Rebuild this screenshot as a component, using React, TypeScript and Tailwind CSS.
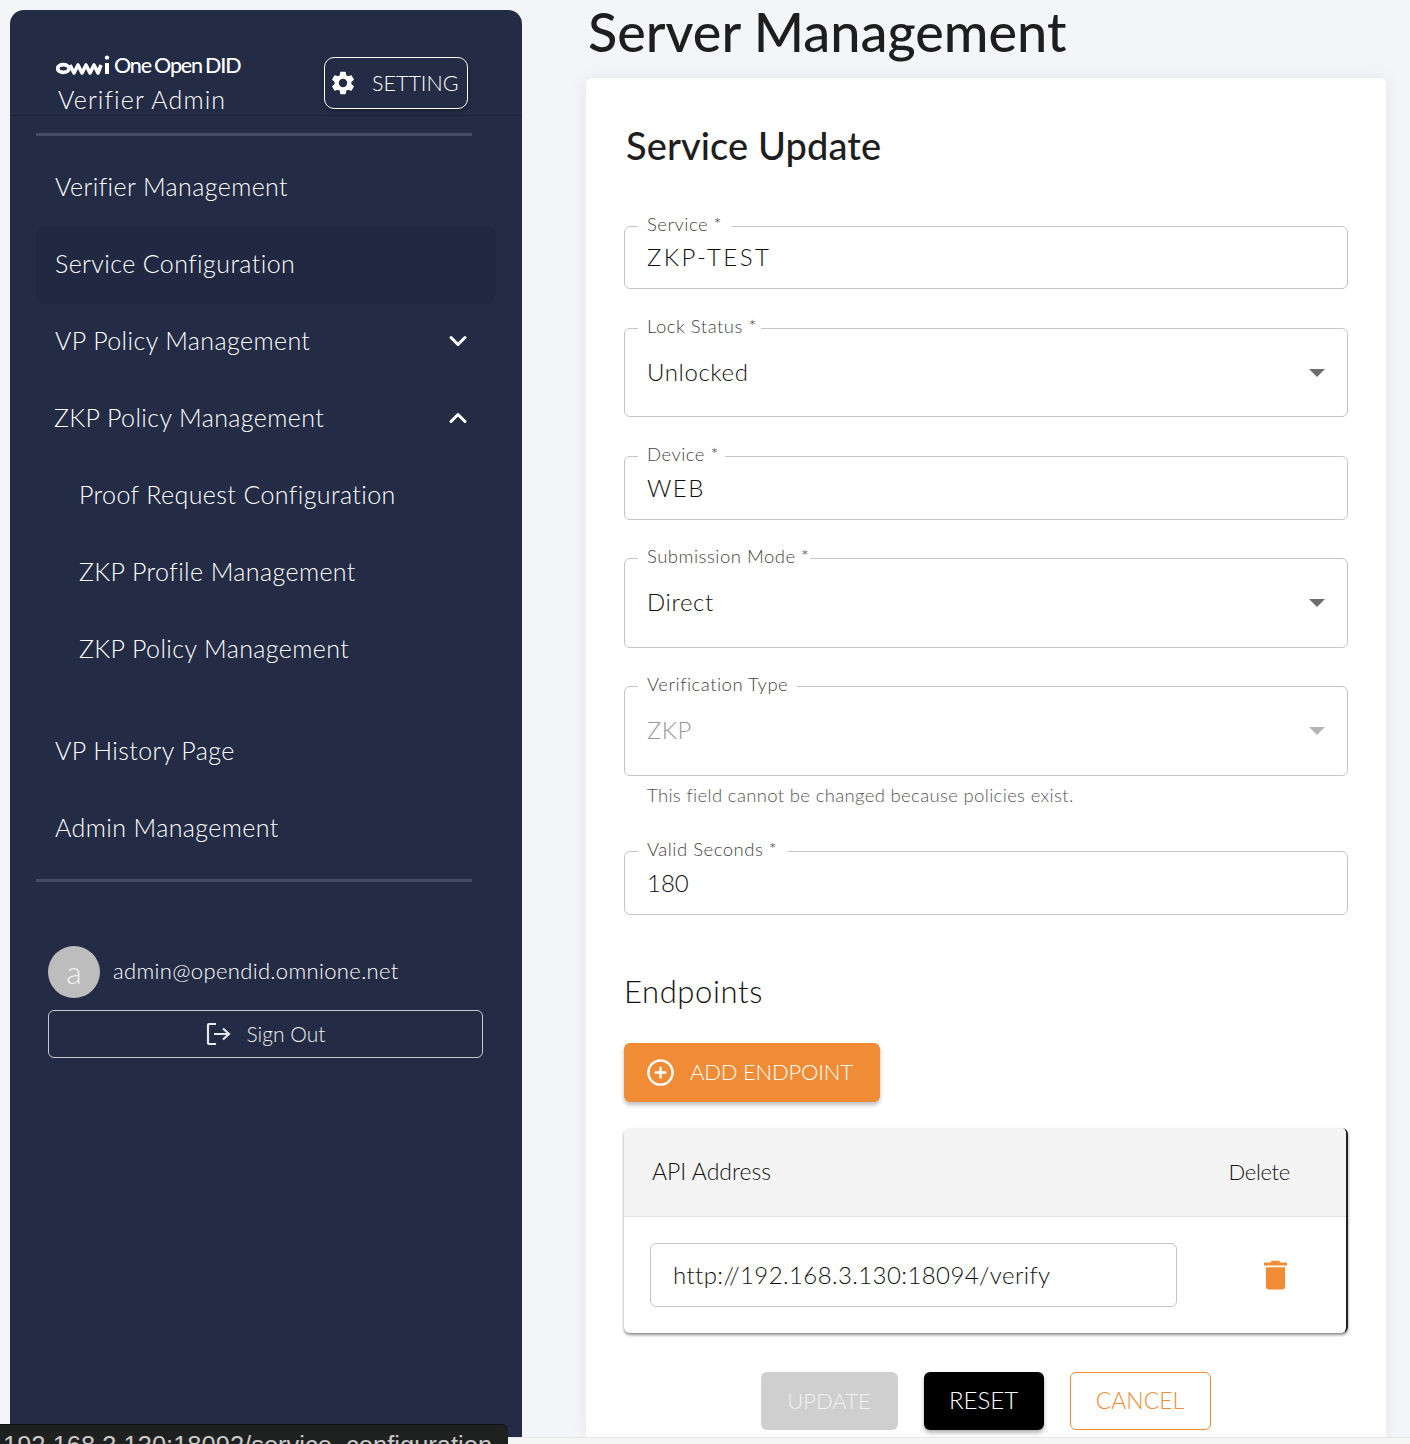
import React from "react";
import { ChevronDown, ChevronUp, CirclePlus } from "lucide-react";

const font = { fontFamily: '"Lato", "Open Sans", sans-serif' };

function Gear() {
  return (
    <svg viewBox="0 0 24 24" className="w-[28px] h-[28px]" fill="#fff">
      <path d="M19.14 12.94c.04-.3.06-.61.06-.94s-.02-.64-.07-.94l2.03-1.58a.49.49 0 0 0 .12-.61l-1.92-3.32a.49.49 0 0 0-.59-.22l-2.39.96a7 7 0 0 0-1.62-.94l-.36-2.54a.48.48 0 0 0-.48-.41h-3.84a.48.48 0 0 0-.47.41l-.36 2.54c-.59.24-1.13.56-1.62.94l-2.39-.96a.48.48 0 0 0-.59.22L2.74 8.87a.47.47 0 0 0 .12.61l2.03 1.58c-.05.3-.09.63-.09.94s.02.64.07.94l-2.03 1.58a.49.49 0 0 0-.12.61l1.92 3.32c.12.22.37.29.59.22l2.39-.96c.5.38 1.03.7 1.62.94l.36 2.54c.05.24.24.41.48.41h3.84c.24 0 .44-.17.47-.41l.36-2.54c.59-.24 1.13-.56 1.62-.94l2.39.96c.22.08.47 0 .59-.22l1.92-3.32a.47.47 0 0 0-.12-.61l-2.01-1.58zM12 15.6A3.6 3.6 0 1 1 12 8.4a3.6 3.6 0 0 1 0 7.2z" />
    </svg>
  );
}

function SignOutIcon() {
  return (
    <svg viewBox="0 0 26 24" className="w-[26px] h-[24px]" fill="none" stroke="#e6e7ea" strokeWidth="2.2">
      <path d="M10 2H3a1 1 0 0 0-1 1v18a1 1 0 0 0 1 1h7" />
      <path d="M8 12h15M17 6.5l6 5.5-6 5.5" />
    </svg>
  );
}

function Logo() {
  return (
    <div className="flex items-center h-[26px]">
      <svg viewBox="0 0 54 22" className="w-[54px] h-[22px]" fill="none" stroke="#fff">
        <ellipse cx="7.3" cy="13.5" rx="5.6" ry="3.8" strokeWidth="3.8" />
        <path d="M14 10 l4 8 l4 -8 l4 8 l4 -8 l4 8 l4 -8 l4 8 l3 -8" strokeWidth="3.6" strokeLinejoin="round" />
        <path d="M51 8 V19" strokeWidth="4" />
        <circle cx="51" cy="2.6" r="2.2" fill="#fff" stroke="none" />
      </svg>
      <span className="ml-[4px] text-white text-[21.5px] font-medium tracking-[-1.2px] [word-spacing:-1px] leading-none whitespace-pre">One Open DID</span>
    </div>
  );
}

function NavItem({ label, indent = 55, chevron, selected }: { label: string; indent?: number; chevron?: "up" | "down"; selected?: boolean }) {
  return (
    <div
      className={`h-[77px] pb-[2px] flex items-center justify-between text-[25px] font-light text-white tracking-[0.4px] rounded-[8px] mr-[-23px] pr-[23px] ${selected ? "bg-[#212942]" : ""}`}
      style={{ paddingLeft: indent - 36 }}
    >
      <span>{label}</span>
      {chevron === "down" && <ChevronDown className="w-[28px] h-[28px]" strokeWidth={2.6} />}
      {chevron === "up" && <ChevronUp className="w-[28px] h-[28px]" strokeWidth={2.6} />}
    </div>
  );
}

function Sidebar() {
  return (
    <aside className="w-[512px] shrink-0 ml-[10px] mt-[10px] bg-[#232b45] rounded-t-[14px] text-white">
      <div className="h-[106px] border-b border-[#1e2539] flex justify-between pl-[46px] pr-[54px] pt-[43px]">
        <div>
          <Logo />
          <div className="text-[25px] font-light leading-[32px] tracking-[1.1px] ml-[2px] mt-[4px]">Verifier Admin</div>
        </div>
        <div className="w-[144px] h-[52px] mt-[4px] border border-white rounded-[10px] flex items-center pl-[4px] gap-[15px] text-[21.5px] font-light text-white shadow-[0_2px_4px_rgba(0,0,0,0.3)]">
          <Gear />
          <span>SETTING</span>
        </div>
      </div>
      <div className="mx-[26px] w-[436px] h-[3px] mt-[17px] bg-[#454b64]" />
      <nav className="ml-[26px] w-[436px] mt-[13px]">
        <NavItem label="Verifier Management" />
        <NavItem label="Service Configuration" selected />
        <NavItem label="VP Policy Management" chevron="down" />
        <NavItem label="ZKP Policy Management" indent={54} chevron="up" />
        <NavItem label="Proof Request Configuration" indent={79} />
        <NavItem label="ZKP Profile Management" indent={79} />
        <NavItem label="ZKP Policy Management" indent={79} />
        <div className="h-[25px]" />
        <NavItem label="VP History Page" />
        <NavItem label="Admin Management" />
      </nav>
      <div className="mx-[26px] w-[436px] h-[3px] mt-[12px] bg-[#454b64]" />
      <div className="ml-[38px] w-[435px] mt-[64px]">
        <div className="flex items-center gap-[13px]">
          <div className="w-[52px] h-[52px] rounded-full bg-[#bdbdbd] flex items-center justify-center text-[32px] font-light text-[#f3f3f3] pb-[1px]">a</div>
          <span className="text-[22px] font-light text-white tracking-[0.35px] pb-[3px]">admin@opendid.omnione.net</span>
        </div>
        <div className="mt-[12px] h-[48px] border border-[#c9cbd2] rounded-[6px] flex items-center justify-center gap-[15px] text-[21px] font-light text-[#eeeff1]">
          <SignOutIcon />
          <span>Sign Out</span>
        </div>
      </div>
    </aside>
  );
}

function Field({
  label,
  value,
  height,
  notch,
  select,
  disabled,
  top,
  spacing = 0.6,
  className = "",
}: {
  label: string;
  value: string;
  height: number;
  notch: number;
  select?: boolean;
  disabled?: boolean;
  top: number;
  spacing?: number;
  className?: string;
}) {
  return (
    <div className={`relative border border-[#c4c4c4] rounded-[6px] flex items-start pl-[22px] pr-[22px] ${className}`} style={{ height }}>
      <span
        className="absolute left-[13px] top-[-15px] h-[26px] pl-[9px] bg-white text-[18.5px] font-light leading-[24px] text-[#444] tracking-[0.5px] whitespace-nowrap"
        style={{ width: notch }}
      >
        {label}
      </span>
      <span className={`text-[24px] font-light leading-[34px] ${disabled ? "text-[#999]" : "text-[#111]"}`} style={{ marginTop: top, letterSpacing: spacing }}>
        {value}
      </span>
      {select && (
        <svg viewBox="0 0 16 8" className="absolute right-[22px] top-1/2 -mt-[4px] w-[16px] h-[8px]">
          <path d="M0 0h16L8 8z" fill={disabled ? "#b5b5b5" : "#6d6d6d"} />
        </svg>
      )}
    </div>
  );
}

function Trash() {
  return (
    <svg viewBox="0 0 24 30" className="w-[23px] h-[30px]" fill="#f08c35">
      <path d="M8 0h8l1 2h7v3H0V2h7z" />
      <path d="M2 7h20v20a3 3 0 0 1-3 3H5a3 3 0 0 1-3-3z" />
    </svg>
  );
}

function Card() {
  return (
    <section className="w-[800px] flex-1 bg-white rounded-t-[6px] shadow-[0_0_18px_rgba(0,0,0,0.07)] pl-[38px] pr-[38px] overflow-hidden">
      <h2 className="text-[38px] leading-[48px] font-medium text-[#1e1e1e] mt-[43px] ml-[2px] tracking-[0.1px]">Service Update</h2>
      <div className="mt-[57px]">
        <Field label="Service *" value="ZKP-TEST" height={63} notch={94} top={13} spacing={2.5} />
        <Field label="Lock Status *" value="Unlocked" height={89} notch={123} top={26} className="mt-[39px]" select />
        <Field label="Device *" value="WEB" height={64} notch={87} top={14} spacing={1.4} className="mt-[39px]" />
        <Field label="Submission Mode *" value="Direct" height={90} notch={172} top={26} select className="mt-[38px]" />
        <Field label="Verification Type" value="ZKP" height={90} notch={159} top={26} select disabled spacing={0.4} className="mt-[38px]" />
        <p className="ml-[23px] mt-[6px] h-[26px] text-[18.5px] font-light leading-[26px] text-[#555] tracking-[0.34px]">This field cannot be changed because policies exist.</p>
        <Field label="Valid Seconds *" value="180" height={64} notch={150} top={14} spacing={0} className="mt-[43px]" />
      </div>
      <h3 className="mt-[52px] text-[31px] font-light leading-[48px] text-[#111] tracking-[0.6px]">Endpoints</h3>
      <button className="mt-[28px] w-[256px] h-[59px] rounded-[6px] bg-[#f08c35] text-white text-[22px] font-light tracking-[-0.2px] flex items-center pl-[22px] pb-[2px] gap-[15px] shadow-[0_3px_4px_rgba(0,0,0,0.25)]">
        <CirclePlus className="w-[29px] h-[29px] mt-[2px]" strokeWidth={2} />
        <span>ADD ENDPOINT</span>
      </button>
      <div className="mt-[26px] w-[724px] h-[205px] rounded-[6px] border-r-2 border-r-[#222] shadow-[0_2px_3px_rgba(0,0,0,0.45)] overflow-hidden">
        <div className="h-[89px] bg-[#f4f4f4] border-b border-[#e2e2e2] flex items-center justify-between pl-[28px] pr-[56px] pb-[2px] font-light text-[#111]">
          <span className="text-[23px]">API Address</span>
          <span className="text-[22px] tracking-[-0.3px]">Delete</span>
        </div>
        <div className="flex items-center pl-[26px] h-[116px]">
          <div className="w-[527px] h-[64px] border border-[#c4c4c4] rounded-[6px] flex items-center pl-[22px] text-[24px] font-light text-[#111] tracking-[0.4px]">
            http://192.168.3.130:18094/verify
          </div>
          <div className="ml-[87px]">
            <Trash />
          </div>
        </div>
      </div>
      <div className="mt-[39px] flex justify-center gap-[26px] ml-[-1px] text-[23px] font-light">
        <button className="w-[137px] h-[58px] pb-[2px] rounded-[6px] bg-[#cfcfcf] text-[#f2f2f2] text-[22px]">UPDATE</button>
        <button className="w-[120px] h-[58px] pb-[2px] rounded-[6px] bg-black text-white text-[24px] shadow-[0_3px_4px_rgba(0,0,0,0.3)]">RESET</button>
        <button className="w-[141px] h-[58px] pb-[2px] rounded-[6px] border border-[#f08c35] text-[#f08c35]">CANCEL</button>
      </div>
    </section>
  );
}

export default function App() {
  return (
    <div className="relative w-[1410px] h-[1444px] overflow-hidden bg-[#f4f5f8]" style={font}>
      <div className="h-[1437px] flex overflow-hidden">
        <Sidebar />
        <main className="ml-[64px] flex flex-col w-[800px]">
          <h1 className="text-[54px] leading-[64px] font-medium text-[#1e1e1e] ml-[2px] mb-[14px] whitespace-nowrap">Server Management</h1>
          <Card />
        </main>
      </div>
      <div className="h-[7px] bg-[#f5f5f5] border-t border-[#e6e6e6]" />
      <div className="absolute left-0 bottom-0 w-[508px] h-[20px] bg-[#1f2120] rounded-tr-[6px] overflow-hidden border-t border-[#111]">
        <span className="absolute left-[3px] top-[7px] text-[25.5px] leading-[26px] text-[#c9c9c9] whitespace-nowrap" style={{ fontFamily: '"Liberation Sans", sans-serif' }}>
          192.168.3.130:18092/service_configuration
        </span>
      </div>
    </div>
  );
}
